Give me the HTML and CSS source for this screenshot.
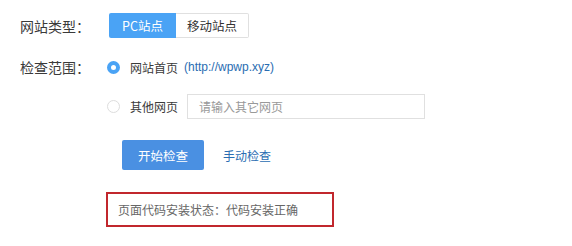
FILE: index.html
```html
<!DOCTYPE html>
<html lang="zh-CN">
<head>
<meta charset="utf-8">
<title>代码检查</title>
<link rel="stylesheet" href="styles.css">
</head>
<body>
<div class="form">
  <div class="row row-type">
    <div class="label">网站类型：</div>
    <div class="seg">
      <span class="seg-btn active">PC站点</span>
      <span class="seg-btn mobile">移动站点</span>
    </div>
  </div>
  <div class="row row-home">
    <div class="label">检查范围：</div>
    <span class="radio checked"></span>
    <span class="radio-text">网站首页</span>
    <span class="url">(http://wpwp.xyz)</span>
  </div>
  <div class="row row-other">
    <div class="label"></div>
    <span class="radio"></span>
    <span class="radio-text">其他网页</span>
    <div class="input">请输入其它网页</div>
  </div>
  <div class="row row-actions">
    <div class="label"></div>
    <span class="btn-primary">开始检查</span>
    <span class="link">手动检查</span>
  </div>
  <div class="row row-status">
    <div class="label"></div>
    <div class="status">页面代码安装状态：代码安装正确</div>
  </div>
</div>
</body>
</html>
```

FILE: styles.css
```css
html, body {
  margin: 0;
  padding: 0;
  background: #fff;
}
body {
  font-family: "Noto Sans CJK SC", "Liberation Sans", sans-serif;
  color: #333;
  font-size: 12px;
  width: 572px;
  height: 246px;
  overflow: hidden;
}
.form {
  display: flex;
  flex-direction: column;
  padding: 13px 0 0 20px;
}
.row {
  display: flex;
  align-items: center;
}
.label {
  width: 89px;
  flex: none;
  font-size: 14px;
  color: #3a3a3a;
  line-height: 20px;
}
.row-type { height: 25px; }
.seg {
  display: flex;
  height: 25px;
}
.seg-btn {
  display: flex;
  align-items: center;
  justify-content: center;
  box-sizing: border-box;
  height: 25px;
  font-size: 12.5px;
}
.seg-btn.active {
  width: 67px;
  background: #4aa3f5;
  color: #fff;
  border-radius: 2px 0 0 2px;
}
.seg-btn.mobile {
  width: 73px;
  border: 1px solid #e0e0e0;
  border-left: none;
  color: #333;
  border-radius: 0 2px 2px 0;
}
.row-home {
  margin-top: 17px;
  height: 24px;
}
.row-other {
  margin-top: 15px;
  height: 25px;
}
.radio {
  box-sizing: border-box;
  width: 13px;
  height: 13px;
  border-radius: 50%;
  border: 1px solid #ddd;
  margin-left: -2px;
  flex: none;
}
.radio.checked {
  border: 4px solid #4aa3f5;
  background: #fff;
}
.radio-text {
  margin-left: 10px;
  font-size: 12px;
  color: #3a3a3a;
}
.url {
  margin-left: 6px;
  font-family: "Liberation Sans", sans-serif;
  font-size: 12px;
  color: #2a6db2;
}
.input {
  box-sizing: border-box;
  margin-left: 9px;
  width: 238px;
  height: 25px;
  border: 1px solid #e0e0e0;
  padding-left: 11px;
  display: flex;
  align-items: center;
  font-size: 12px;
  color: #999;
}
.row-actions {
  margin-top: 21px;
  height: 30px;
}
.btn-primary {
  margin-left: 13px;
  width: 82px;
  height: 30px;
  border-radius: 2px;
  background: #4a90e2;
  color: #fff;
  display: flex;
  align-items: center;
  justify-content: center;
  font-size: 12.5px;
}
.link {
  margin-left: 19px;
  font-size: 12px;
  color: #2a6db2;
}
.row-status {
  margin-top: 22px;
  height: 35px;
}
.status {
  margin-left: -3px;
  box-sizing: border-box;
  width: 228px;
  height: 35px;
  border: 2px solid #c1272d;
  padding-left: 10px;
  display: flex;
  align-items: center;
  font-size: 12px;
  color: #666;
}
```
